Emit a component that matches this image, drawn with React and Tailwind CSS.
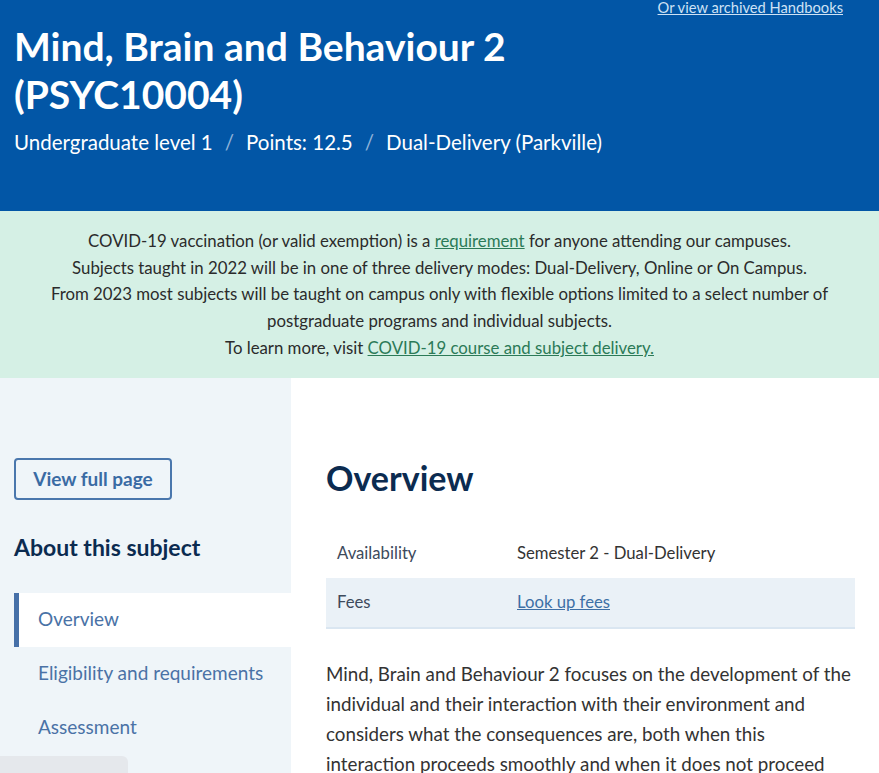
import React from 'react';

const font = { fontFamily: '"Lato", "Noto Sans", sans-serif' };

function NavItem({ label, active }) {
  return (
    <li
      className={
        active
          ? 'h-[54px] flex items-center bg-white border-l-[5px] border-[#4670a8] pl-[19px] text-[19px] text-[#4a72a6]'
          : 'h-[54px] flex items-center pl-[24px] text-[19px] text-[#4a72a6]'
      }
    >
      {label}
    </li>
  );
}

export default function App() {
  return (
    <div className="w-[879px] h-[773px] overflow-hidden relative" style={font}>
      {/* header */}
      <header className="bg-[#0256a6] h-[211px] relative px-[14px] pt-[22px] text-white">
        <a className="absolute right-[36px] top-[-4px] text-[14.7px] text-[#cfe2f5] underline">
          Or view archived Handbooks
        </a>
        <h1 className="text-[39px] leading-[48px] font-bold">
          Mind, Brain and Behaviour 2
          <br />
          (PSYC10004)
        </h1>
        <p className="mt-[9px] text-[20.5px] flex gap-[12px]">
          <span>Undergraduate level 1</span>
          <span className="text-[#8fb3d9]">/</span>
          <span>Points: 12.5</span>
          <span className="text-[#8fb3d9]">/</span>
          <span>Dual-Delivery (Parkville)</span>
        </p>
      </header>

      {/* notice */}
      <section className="bg-[#d5f0e5] h-[167px] pt-[17px] text-center text-[16.8px] leading-[26.7px] text-[#2b2b2b]">
        <p>
          COVID-19 vaccination (or valid exemption) is a{' '}
          <a className="text-[#2b7a57] underline">requirement</a> for anyone attending our campuses.
        </p>
        <p>Subjects taught in 2022 will be in one of three delivery modes: Dual-Delivery, Online or On Campus.</p>
        <p className="px-[40px]">
          From 2023 most subjects will be taught on campus only with flexible options limited to a select number of
          postgraduate programs and individual subjects.
        </p>
        <p>
          To learn more, visit{' '}
          <a className="text-[#2b7a57] underline">COVID-19 course and subject delivery.</a>
        </p>
      </section>

      <div className="flex h-[395px]">
        {/* sidebar */}
        <aside className="w-[291px] bg-[#eff5f9] pt-[80px] relative">
          <button className="ml-[14px] w-[158px] h-[42px] border-2 border-[#4a77ad] rounded-[4px] text-[19px] font-bold text-[#3a6ba4]">
            View full page
          </button>
          <h2 className="ml-[14px] mt-[30px] text-[23px] font-bold text-[#0b2b50]">About this subject</h2>
          <ul className="ml-[14px] mt-[28px]">
            <NavItem label="Overview" active />
            <NavItem label="Eligibility and requirements" />
            <NavItem label="Assessment" />
          </ul>
          <div className="absolute left-0 bottom-0 w-[128px] h-[17px] bg-[#e5e8ec] rounded-tr-[6px]" />
        </aside>

        {/* main */}
        <main className="flex-1 pl-[35px] pr-[24px] pt-[78px]">
          <h2 className="text-[34px] font-bold text-[#0b2b50] leading-[44px]">Overview</h2>
          <table className="mt-[30px] w-full text-[16.7px] text-[#333]">
            <tbody>
              <tr className="h-[48px]">
                <td className="pl-[11px] w-[191px] text-[#3d4a5c]">Availability</td>
                <td>Semester 2 - Dual-Delivery</td>
              </tr>
              <tr className="h-[50px] bg-[#eaf1f7] border-b-2 border-[#dae6f1]">
                <td className="pl-[11px] text-[#3d4a5c]">Fees</td>
                <td>
                  <a className="text-[#3d6fa6] underline">Look up fees</a>
                </td>
              </tr>
            </tbody>
          </table>
          <p className="mt-[30px] text-[18.8px] leading-[30px] text-[#333]">
            Mind, Brain and Behaviour 2 focuses on the development of the individual and their interaction with their
            environment and considers what the consequences are, both when this interaction proceeds smoothly and when
            it does not proceed smoothly.
          </p>
        </main>
      </div>
    </div>
  );
}
